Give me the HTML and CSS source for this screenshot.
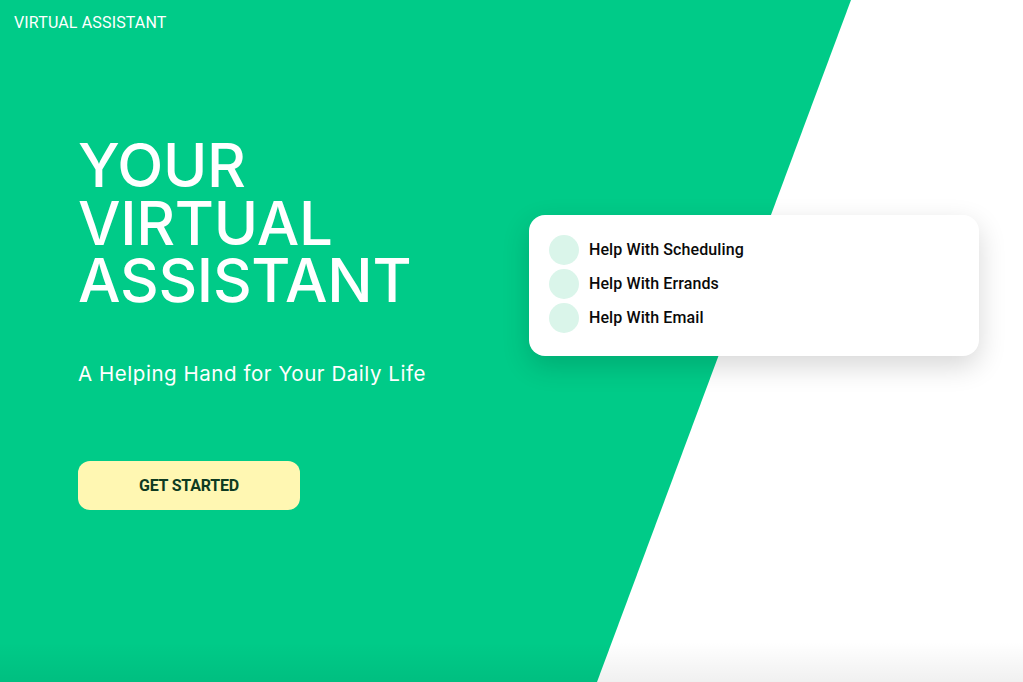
FILE: index.html
```html
<!DOCTYPE html>
<html lang="en">
<head>
<meta charset="utf-8">
<title>Virtual Assistant</title>
<link rel="stylesheet" href="styles.css">
</head>
<body>
<div class="page">
  <header class="brand">VIRTUAL ASSISTANT</header>
  <main class="hero">
    <section class="intro">
      <h1 class="headline">YOUR<br>VIRTUAL<br>ASSISTANT</h1>
      <p class="tagline">A Helping Hand for Your Daily Life</p>
      <a class="cta" href="#">GET STARTED</a>
    </section>
    <ul class="card">
      <li class="item"><span class="dot"></span>Help With Scheduling</li>
      <li class="item"><span class="dot"></span>Help With Errands</li>
      <li class="item"><span class="dot"></span>Help With Email</li>
    </ul>
  </main>
</div>
</body>
</html>
```
FILE: styles.css
```css
* { box-sizing: border-box; }
html, body { margin: 0; padding: 0; }
body {
  font-family: Roboto, "Liberation Sans", sans-serif;
  background: #fff;
  color: #fff;
}
.page {
  position: relative;
  width: 1023px;
  height: 682px;
  overflow: hidden;
}
.page::before {
  content: "";
  position: absolute;
  inset: 0;
  background: #00cb88;
  clip-path: polygon(0 0, 851px 0, 597px 682px, 0 682px);
  z-index: 0;
}
.page::after {
  content: "";
  position: absolute;
  left: 0; right: 0; bottom: 0;
  height: 40px;
  background: linear-gradient(to bottom, rgba(0,0,0,0), rgba(0,0,0,0.06));
  pointer-events: none;
}
.brand {
  position: relative;
  z-index: 1;
  padding: 13px 14px 0;
  height: 45px;
  font-size: 16px;
  line-height: 20px;
  letter-spacing: 0.15px;
}
.hero {
  position: relative;
  z-index: 1;
  display: flex;
  align-items: flex-start;
  padding-left: 78px;
  padding-right: 44px;
}
.intro {
  display: flex;
  flex-direction: column;
  align-items: flex-start;
  padding-top: 92px;
}
.headline {
  margin: 0;
  font-family: Inter, Roboto, sans-serif;
  font-size: 60px;
  line-height: 57.5px;
  font-weight: 500;
  letter-spacing: -0.3px;
}
.tagline {
  margin: 52px 0 0;
  font-family: Inter, Roboto, sans-serif;
  font-size: 20.5px;
  line-height: 24px;
  font-weight: 400;
  letter-spacing: 0.55px;
}
.cta {
  margin-top: 75px;
  width: 222px;
  height: 49px;
  display: flex;
  align-items: center;
  justify-content: center;
  background: #fff7b2;
  border-radius: 12px;
  color: #0e3b22;
  font-size: 16px;
  font-weight: 700;
  text-decoration: none;
  letter-spacing: -0.2px;
}
.card {
  margin: 170px 0 0 auto;
  width: 450px;
  list-style: none;
  padding: 20px 20px 23px;
  background: #fff;
  border-radius: 16px;
  box-shadow: 0 10px 28px rgba(0,0,0,0.16);
  display: flex;
  flex-direction: column;
  gap: 4px;
}
.item {
  display: flex;
  align-items: center;
  gap: 10px;
  color: #0a0a0a;
  font-size: 16px;
  font-weight: 500;
  line-height: 30px;
  letter-spacing: 0.1px;
}
.dot {
  width: 30px;
  height: 30px;
  border-radius: 50%;
  background: #daf5ea;
  flex: none;
}
```
